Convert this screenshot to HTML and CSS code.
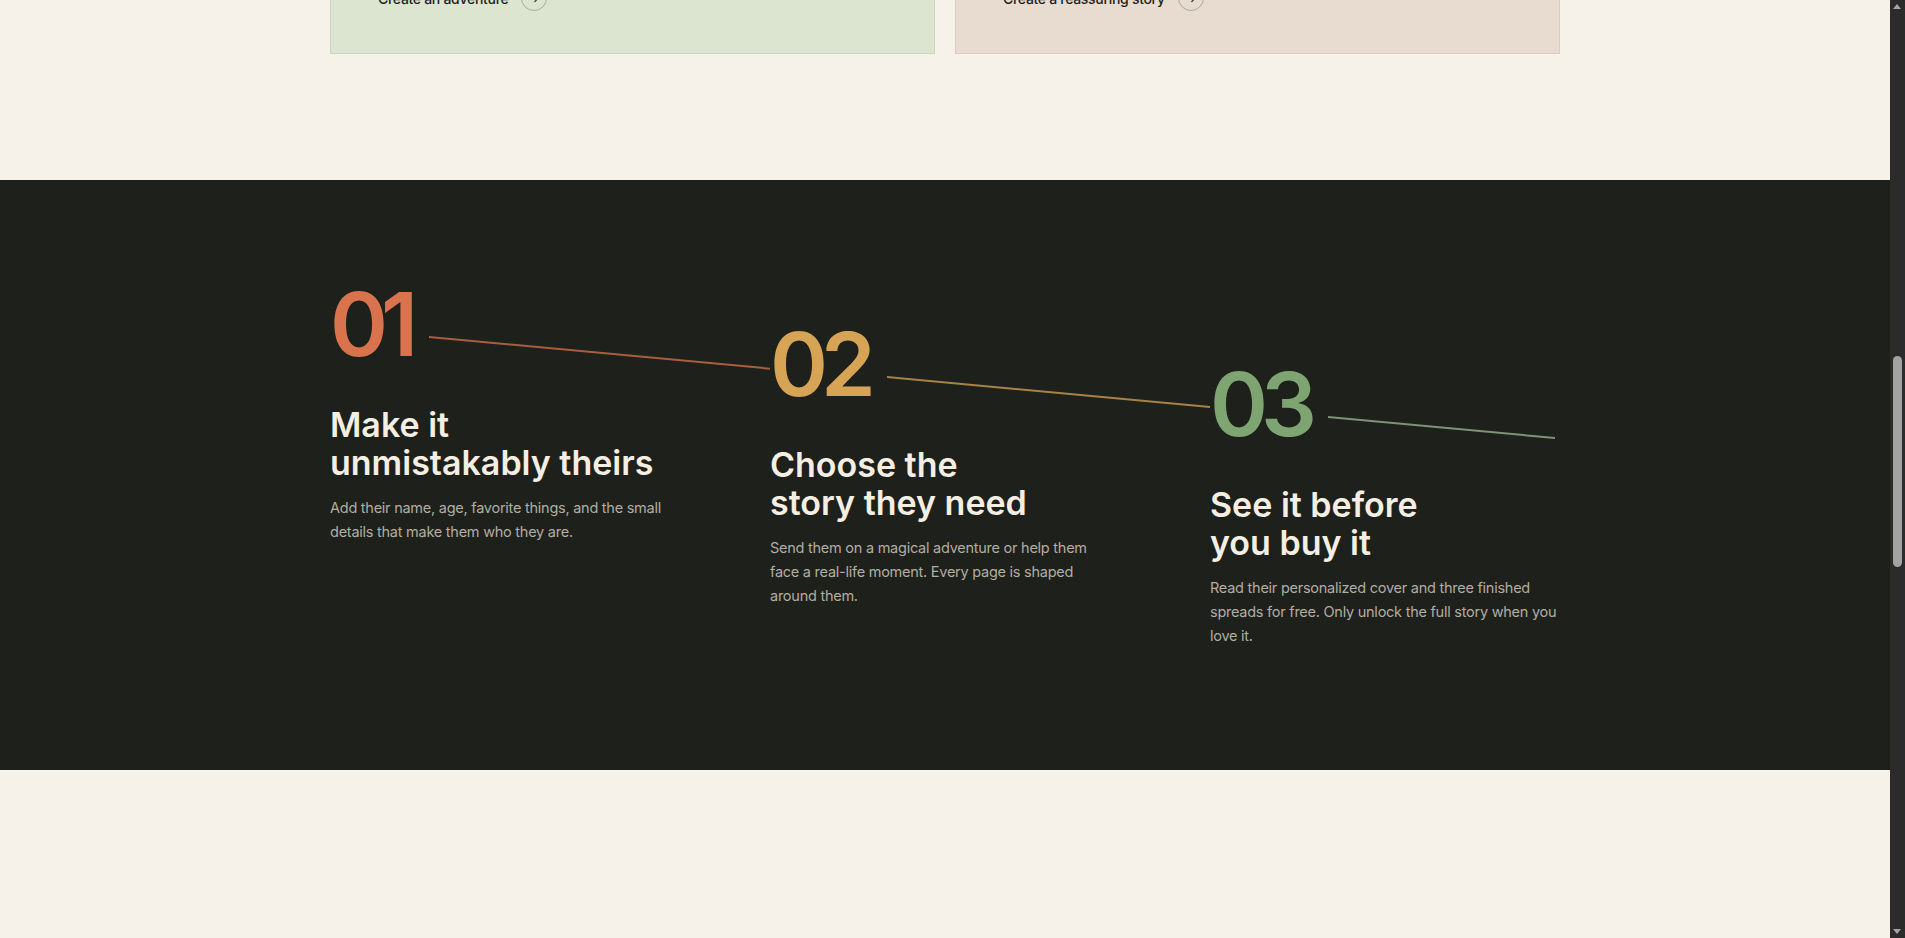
FILE: index.html
```html
<!DOCTYPE html>
<html lang="en">
<head>
  <meta charset="UTF-8">
  <title>How it works</title>
  <link rel="stylesheet" href="styles.css">
</head>
<body>

<!-- Story paths (two cards) -->
<section class="paths">
  <div class="wrap paths-grid">
    <div class="path-card path-card--green">
      <a class="path-link" href="#">Create an adventure
        <span class="arrow-circle">
          <svg viewBox="0 0 16 16" width="14" height="14"><path d="M2 8h11M9 4l4 4-4 4" fill="none" stroke="#3a3a36" stroke-width="1.4" stroke-linecap="round" stroke-linejoin="round"/></svg>
        </span>
      </a>
    </div>
    <div class="path-card path-card--rose">
      <a class="path-link" href="#">Create a reassuring story
        <span class="arrow-circle">
          <svg viewBox="0 0 16 16" width="14" height="14"><path d="M2 8h11M9 4l4 4-4 4" fill="none" stroke="#3a3a36" stroke-width="1.4" stroke-linecap="round" stroke-linejoin="round"/></svg>
        </span>
      </a>
    </div>
  </div>
</section>

<!-- How it works -->
<section class="steps">
  <div class="wrap steps-grid">
    <div class="step step--one">
      <div class="step-top">
        <span class="step-num">01</span>
        <span class="step-line"></span>
      </div>
      <h3>Make it<br>unmistakably theirs</h3>
      <p>Add their name, age, favorite things, and the small<br>details that make them who they are.</p>
    </div>

    <div class="step step--two">
      <div class="step-top">
        <span class="step-num">02</span>
        <span class="step-line"></span>
      </div>
      <h3>Choose the<br>story they need</h3>
      <p>Send them on a magical adventure or help them<br>face a real-life moment. Every page is shaped<br>around them.</p>
    </div>

    <div class="step step--three">
      <div class="step-top">
        <span class="step-num">03</span>
        <span class="step-line"></span>
      </div>
      <h3>See it before<br>you buy it</h3>
      <p>Read their personalized cover and three finished<br>spreads for free. Only unlock the full story when you<br>love it.</p>
    </div>
  </div>
</section>

<section class="after"></section>

<!-- page scrollbar (dark) -->
<div class="scrollbar" aria-hidden="true">
  <span class="sb-arrow sb-arrow--up"></span>
  <span class="sb-thumb"></span>
  <span class="sb-arrow sb-arrow--down"></span>
</div>

</body>
</html>
```

FILE: styles.css
```css
body {
  margin: 0;
  padding-right: 15px;
  background: #f6f1e9;
  font-family: 'Inter', 'Liberation Sans', sans-serif;
  color: #1f1f1c;
}

.wrap {
  width: 1230px;
  margin: 0 auto;
}

/* ---------- story path cards ---------- */

.paths {
  padding-bottom: 126px;
}

.paths-grid {
  display: grid;
  grid-template-columns: 1fr 1fr;
  gap: 20px;
  margin-top: -16px;
}

.path-card {
  padding: 0 47px 42px;
  border: 1px solid;
}

.path-card--green {
  background: #dce5cf;
  border-color: #cdd5c1;
}

.path-card--rose {
  background: #e8dbd0;
  border-color: #d9cdc2;
}

.path-link {
  display: inline-flex;
  align-items: center;
  gap: 13px;
  height: 26px;
  font-size: 14px;
  font-weight: 500;
  letter-spacing: -0.3px;
  color: #1f1f1c;
  text-decoration: none;
}

.arrow-circle {
  width: 24px;
  height: 24px;
  border: 1px solid #a9aa9f;
  border-radius: 50%;
  display: flex;
  align-items: center;
  justify-content: center;
}

/* ---------- steps ---------- */

.steps {
  background: #1d201b;
  padding: 100px 0 122px;
}

.steps-grid {
  display: grid;
  grid-template-columns: repeat(3, 1fr);
  gap: 90px;
}

.step--two { padding-top: 40px; }
.step--three { padding-top: 80px; }

.step-top {
  display: flex;
  align-items: flex-start;
}

.step-num {
  font-size: 88px;
  line-height: 1;
  font-weight: 600;
  letter-spacing: -0.08em;
  font-variant-numeric: proportional-nums;
}

.step-line {
  flex: 1;
  height: 2px;
  margin: 56px -90px 0 18px;
  transform-origin: 0 0;
  transform: skewY(5.3deg);
  opacity: 0.75;
}

.step--three .step-line {
  margin-right: 5px;
}

.step--one .step-num { color: #d8734e; }
.step--one .step-line { background: #d8734e; }
.step--two .step-num { color: #d7a355; }
.step--two .step-line { background: #d7a355; }
.step--three .step-num { color: #7ea571; }
.step--three .step-line { background: #a3b796; }

.step h3 {
  margin: 38px 0 0;
  font-size: 34px;
  line-height: 38px;
  font-weight: 600;
  letter-spacing: 0;
  color: #f5eee2;
}

.step p {
  margin: 14px 0 0;
  font-size: 14.5px;
  line-height: 24px;
  letter-spacing: -0.25px;
  color: #b3ada2;
}

.after {
  height: 200px;
}

/* ---------- scrollbar strip ---------- */

.scrollbar {
  position: fixed;
  top: 0;
  right: 0;
  width: 15px;
  height: 100vh;
  background: #2b2b2b;
}

.sb-thumb {
  position: absolute;
  top: 356px;
  left: 3px;
  width: 9px;
  height: 211px;
  border-radius: 5px;
  background: #a3a3a3;
}

.sb-arrow {
  position: absolute;
  left: 3px;
  width: 0;
  height: 0;
  border-left: 4.5px solid transparent;
  border-right: 4.5px solid transparent;
}

.sb-arrow--up {
  top: 4px;
  border-bottom: 5px solid #a3a3a3;
}

.sb-arrow--down {
  bottom: 4px;
  border-top: 5px solid #a3a3a3;
}
```
